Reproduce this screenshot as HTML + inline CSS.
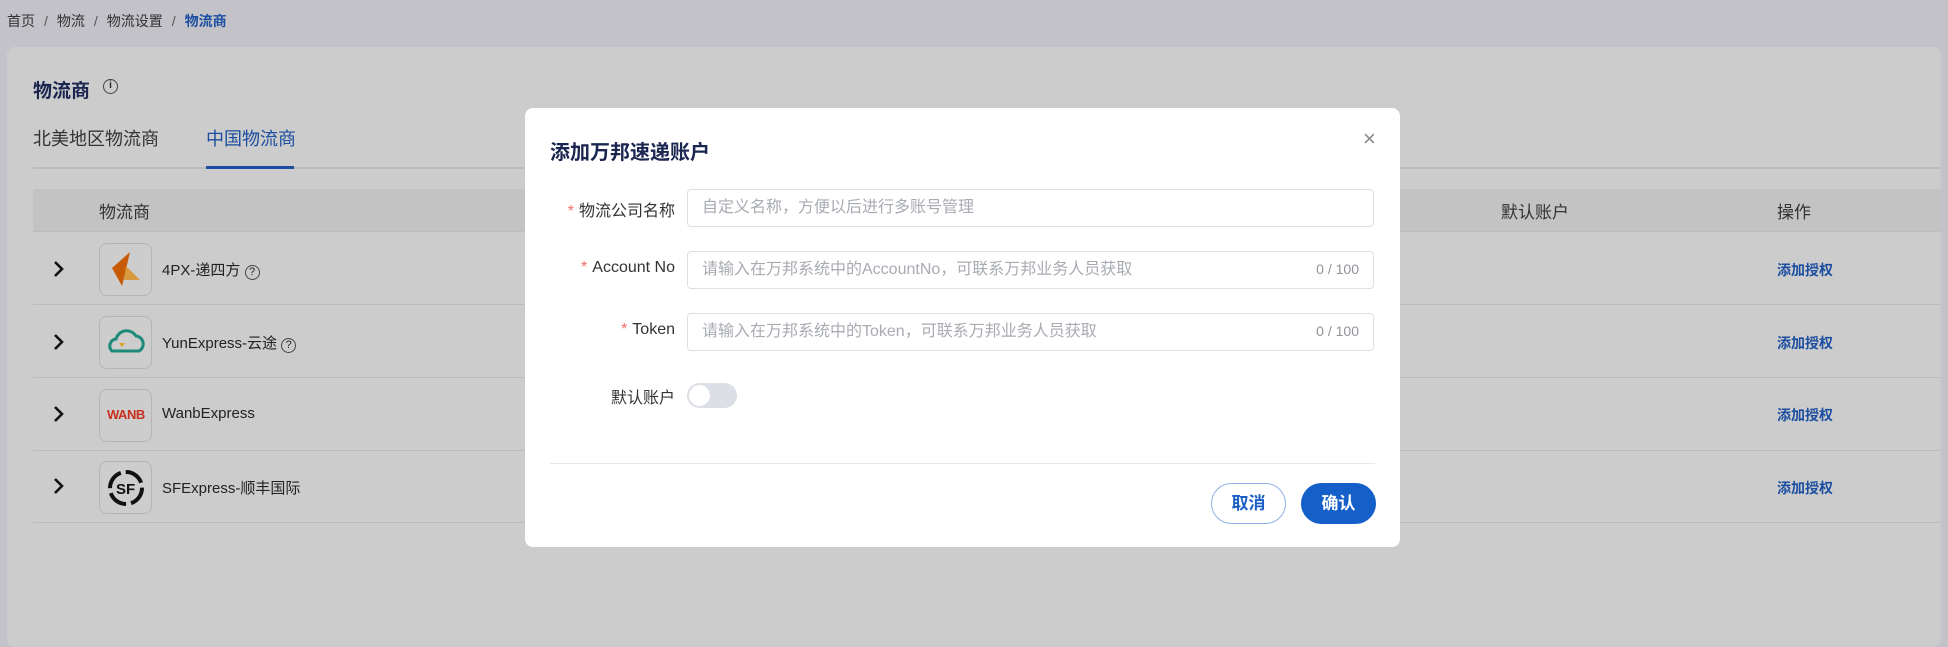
<!DOCTYPE html>
<html><head><meta charset="utf-8"><style>
*{box-sizing:border-box;margin:0;padding:0}
body{width:1948px;height:629px;overflow:hidden;background:#c3c2c8;font-family:"Liberation Sans","Noto Sans CJK SC",sans-serif;position:relative;color:#222}
.abs{position:absolute}
.bc{left:7px;top:11px;font-size:14px;color:#333}
.bc span{margin:0 9px;color:#555}
.card{left:7px;top:47px;width:1934px;height:600px;background:#cccccc;border-radius:8px}
.t{white-space:nowrap}
.row{left:33px;width:1908px;border-bottom:1px solid #bcbcbc;height:73px}
.logo{left:99px;width:53px;height:53px;border:1px solid #b5b5b5;border-radius:8px;background:#cdcdcd}
.chev{left:52px;width:12px;height:18px}
.name{left:162px;font-size:15px;color:#222}
.act{left:1777px;font-size:14px;font-weight:bold;color:#1b4ea0}
.modal{left:525px;top:108px;width:875px;height:439px;background:#fff;border-radius:8px}
.lbl{font-size:16px;color:#333;text-align:right;width:200px}
.lbl b{color:#f56c6c;font-weight:normal;margin-right:5px}
.inp{left:162px;width:687px;height:38px;border:1px solid #dcdfe6;border-radius:4px;font-size:16px;color:#a8abb2;padding:0 14px;line-height:35px}
.cnt{position:absolute;right:14px;top:0;font-size:14px;color:#909399}
</style></head><body>
<div class="abs bc t">首页<span>/</span>物流<span>/</span>物流设置<span>/</span><b style="color:#1b4ea0">物流商</b></div>
<div class="abs card"></div>
<div class="abs t" style="left:33px;top:76px;font-size:19px;font-weight:bold;color:#1a2550">物流商</div>
<div class="abs" style="left:103px;top:79px;width:15px;height:15px;border:1.5px solid #444;border-radius:50%;font-size:10px;text-align:center;line-height:12px;font-weight:bold">i</div>
<div class="abs t" style="left:33px;top:125px;font-size:18px;color:#333">北美地区物流商</div>
<div class="abs t" style="left:206px;top:125px;font-size:18px;color:#1b4ea0">中国物流商</div>
<div class="abs" style="left:33px;top:167px;width:1908px;height:2px;background:#bcbcbc"></div>
<div class="abs" style="left:206px;top:166px;width:88px;height:3px;background:#1b4ea0"></div>
<div class="abs" style="left:33px;top:189px;width:1908px;height:43px;background:#c3c3c3;border-bottom:1px solid #bcbcbc"></div>
<div class="abs t" style="left:99px;top:198px;font-size:17px;color:#333">物流商</div>
<div class="abs t" style="left:1501px;top:198px;font-size:17px;color:#333">默认账户</div>
<div class="abs t" style="left:1777px;top:198px;font-size:17px;color:#333">操作</div>

<div class="abs row" style="top:232px"></div>
<div class="abs row" style="top:305px"></div>
<div class="abs row" style="top:378px"></div>
<div class="abs row" style="top:450px"></div>

<svg class="abs chev" style="top:260px" viewBox="0 0 12 18"><path d="M3 2 L10 9 L3 16" fill="none" stroke="#111" stroke-width="2.6"/></svg>
<svg class="abs chev" style="top:333px" viewBox="0 0 12 18"><path d="M3 2 L10 9 L3 16" fill="none" stroke="#111" stroke-width="2.6"/></svg>
<svg class="abs chev" style="top:405px" viewBox="0 0 12 18"><path d="M3 2 L10 9 L3 16" fill="none" stroke="#111" stroke-width="2.6"/></svg>
<svg class="abs chev" style="top:477px" viewBox="0 0 12 18"><path d="M3 2 L10 9 L3 16" fill="none" stroke="#111" stroke-width="2.6"/></svg>

<div class="abs logo" style="top:243px"><svg width="53" height="53"><path d="M30 8 L12 24 L22 42 L24 34 Z" fill="#c75a05"/><path d="M26 22 L40 36 L24 36 Z" fill="#d79a3e"/></svg></div>
<div class="abs logo" style="top:316px"><svg width="53" height="53"><path d="M12 34 a7 7 0 0 1 4-12 a11 11 0 0 1 20-3 a8 8 0 0 1 3 15 Z" fill="none" stroke="#1e8a7a" stroke-width="3"/><path d="M19 26 h6 l-3 4z" fill="#e0a020"/></svg></div>
<div class="abs logo" style="top:389px"><div style="margin:17px 0 0 7px;font-size:13px;font-weight:bold;color:#c8301e;letter-spacing:-0.5px">WANB</div></div>
<div class="abs logo" style="top:461px"><svg width="53" height="53"><circle cx="26" cy="26" r="16" fill="none" stroke="#111" stroke-width="4" stroke-dasharray="20 5"/><text x="16" y="32" font-size="15" font-weight="bold" font-family="Liberation Sans" fill="#111">SF</text></svg></div>

<div class="abs name t" style="top:259px">4PX-递四方 <span style="display:inline-block;width:15px;height:15px;border:1.3px solid #444;border-radius:50%;font-size:11px;text-align:center;line-height:13px">?</span></div>
<div class="abs name t" style="top:332px">YunExpress-云途 <span style="display:inline-block;width:15px;height:15px;border:1.3px solid #444;border-radius:50%;font-size:11px;text-align:center;line-height:13px">?</span></div>
<div class="abs name t" style="top:405px">WanbExpress</div>
<div class="abs name t" style="top:477px">SFExpress-顺丰国际</div>

<div class="abs act t" style="top:260px">添加授权</div>
<div class="abs act t" style="top:333px">添加授权</div>
<div class="abs act t" style="top:405px">添加授权</div>
<div class="abs act t" style="top:478px">添加授权</div>

<div class="abs modal">
 <div class="abs t" style="left:25px;top:28px;font-size:20px;font-weight:bold;color:#1a2550">添加万邦速递账户</div>
 <div class="abs" style="left:838px;top:18px;font-size:22px;color:#888;font-weight:300">×</div>
 <div class="abs lbl t" style="left:-50px;top:89px"><b>*</b>物流公司名称</div>
 <div class="abs inp t" style="top:81px">自定义名称，方便以后进行多账号管理</div>
 <div class="abs lbl t" style="left:-50px;top:151px"><b>*</b>Account No</div>
 <div class="abs inp t" style="top:143px">请输入在万邦系统中的AccountNo，可联系万邦业务人员获取<span class="cnt">0 / 100</span></div>
 <div class="abs lbl t" style="left:-50px;top:213px"><b>*</b>Token</div>
 <div class="abs inp t" style="top:205px">请输入在万邦系统中的Token，可联系万邦业务人员获取<span class="cnt">0 / 100</span></div>
 <div class="abs lbl t" style="left:-50px;top:276px">默认账户</div>
 <div class="abs" style="left:162px;top:275px;width:50px;height:25px;border-radius:13px;background:#dcdfe6"><div style="margin:2px;width:21px;height:21px;border-radius:50%;background:#fff"></div></div>
 <div class="abs" style="left:25px;top:355px;width:825px;height:1px;background:#e4e7ed"></div>
 <div class="abs t" style="left:686px;top:375px;width:75px;height:41px;border:1px solid #8fb0e6;border-radius:21px;text-align:center;line-height:39px;font-size:17px;font-weight:bold;color:#1b5fc4">取消</div>
 <div class="abs t" style="left:776px;top:375px;width:75px;height:41px;background:#1560c8;border-radius:21px;text-align:center;line-height:41px;font-size:17px;font-weight:bold;color:#fff">确认</div>
</div>
</body></html>
